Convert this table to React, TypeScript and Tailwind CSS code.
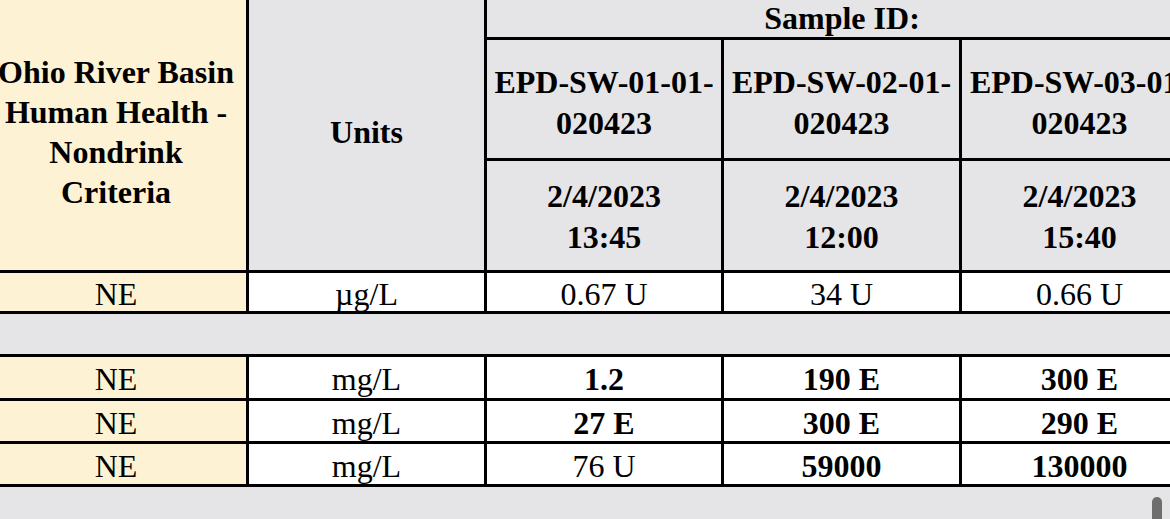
import React from 'react'

const cols = 'grid grid-cols-[263px_238px_237px_238px_238px]'
const line = 'border-r-[3px] border-b-[3px] border-black'

type Val = [string, boolean]
type Row = { crit: string; unit: string; vals: Val[]; h: string }

const topRows: Row[] = [
    { crit: 'NE', unit: 'µg/L', vals: [['0.67 U', false], ['34 U', false], ['0.66 U', false]], h: 'h-[41px]' },
]

const bottomRows: Row[] = [
    { crit: 'NE', unit: 'mg/L', vals: [['1.2', true], ['190 E', true], ['300 E', true]], h: 'h-[44px]' },
    { crit: 'NE', unit: 'mg/L', vals: [['27 E', true], ['300 E', true], ['290 E', true]], h: 'h-[43px]' },
    { crit: 'NE', unit: 'mg/L', vals: [['76 U', false], ['59000', true], ['130000', true]], h: 'h-[43px]' },
]

function DataRow({ crit, unit, vals, h }: Row) {
    return (
        <div className={`${cols} ${h} leading-[32px]`}>
            <div className={`${line} bg-[#fdf2d4] flex items-center justify-center pt-[3px] overflow-hidden`}>{crit}</div>
            <div className={`${line} bg-white flex items-center justify-center pt-[3px] overflow-hidden`}>{unit}</div>
            {vals.map((v, i) => (
                <div key={i} className={`${line} bg-white flex items-center justify-center pt-[3px] overflow-hidden ${v[1] ? 'font-bold' : ''}`}>
                    {v[0]}
                </div>
            ))}
        </div>
    )
}

export default function App() {
    return (
        <div className="relative w-[1170px] h-[519px] overflow-hidden bg-[#e5e4e6] text-black text-[32px] font-['Liberation_Serif',serif]">
            <div className="-ml-[14px] w-[1214px]">
                <div className={`${cols} grid-rows-[40px_121px_112px] font-bold leading-[40px] text-center`}>
                    <div className={`${line} row-span-3 bg-[#fdf2d4] flex items-center justify-center`}>
                        <span className="-mt-[6px] w-[250px]">Ohio River Basin Human Health - Nondrink Criteria</span>
                    </div>
                    <div className={`${line} row-span-3 flex items-center justify-center`}>
                        <span className="-mt-[6px]">Units</span>
                    </div>
                    <div className={`${line} col-span-3 flex items-center justify-center`}>
                        <span className="-mt-[2px]">Sample ID:</span>
                    </div>
                    <div className={`${line} flex items-center justify-center leading-[41px] pt-[7px]`}>EPD-SW-01-01-<br />020423</div>
                    <div className={`${line} flex items-center justify-center leading-[41px] pt-[7px]`}>EPD-SW-02-01-<br />020423</div>
                    <div className={`${line} flex items-center justify-center leading-[41px] pt-[7px]`}>EPD-SW-03-01-<br />020423</div>
                    <div className={`${line} flex items-center justify-center leading-[41px] pt-[2px]`}>2/4/2023<br />13:45</div>
                    <div className={`${line} flex items-center justify-center leading-[41px] pt-[2px]`}>2/4/2023<br />12:00</div>
                    <div className={`${line} flex items-center justify-center leading-[41px] pt-[2px]`}>2/4/2023<br />15:40</div>
                </div>

                {topRows.map((r, i) => (
                    <DataRow key={i} {...r} />
                ))}

                <div className="h-[43px] border-b-[3px] border-black" />

                {bottomRows.map((r, i) => (
                    <DataRow key={i} {...r} />
                ))}
            </div>

            <div className="absolute right-[8px] top-[497px] w-[10px] h-[40px] rounded-full bg-[#6e6e6e]" />
        </div>
    )
}
